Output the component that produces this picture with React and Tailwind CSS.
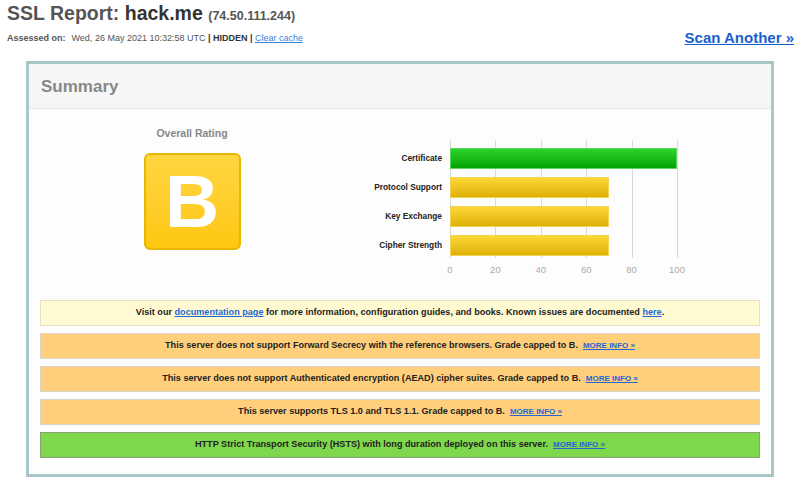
const bars = [
  { label: "Certificate", value: 100, color: "bg-gradient-to-b from-[#2bd42b] to-[#00a300] border-[#5cd65c]" },
  { label: "Protocol Support", value: 70, color: "bg-gradient-to-b from-[#fdd835] to-[#dfb000] border-[#f2d25a]" },
  { label: "Key Exchange", value: 70, color: "bg-gradient-to-b from-[#fdd835] to-[#dfb000] border-[#f2d25a]" },
  { label: "Cipher Strength", value: 70, color: "bg-gradient-to-b from-[#fdd835] to-[#dfb000] border-[#f2d25a]" },
];

const ticks = [0, 20, 40, 60, 80, 100];

const MoreInfo = () => (
  <a href="#" className="ml-[5px] text-[8px] font-bold text-[#2566d6] underline">
    MORE INFO »
  </a>
);

const Notice = ({ tone, children }) => {
  const tones = {
    info: "bg-[#fffad1] border-[#e2e0c4]",
    warn: "bg-[#ffcf7b] border-[#d9d4c8]",
    good: "bg-[#7fd74c] border-[#86a177]",
  };
  return (
    <div
      className={`h-[26px] border flex items-center justify-center text-[9.1px] font-bold text-[#222] ${tones[tone]}`}
    >
      {children}
    </div>
  );
};

const RatingChart = () => (
  <div className="flex">
    <div className="w-[87px] mr-[8px] pt-[8px] flex flex-col gap-[8px]">
      {bars.map((b) => (
        <div key={b.label} className="h-[21px] flex items-center justify-end text-[8.3px] font-bold text-[#222] whitespace-nowrap">
          {b.label}
        </div>
      ))}
    </div>
    <div className="w-[227px]">
      <div className="relative h-[118px] pt-[8px]">
        {/* grid lines */}
        {ticks.map((t) => (
          <div
            key={t}
            className="absolute top-0 bottom-0 w-px bg-[#d9d9d9]"
            style={{ left: `${t}%` }}
          />
        ))}
        <div className="relative flex flex-col gap-[8px]">
          {bars.map((b) => (
            <div
              key={b.label}
              className={`h-[21px] border ${b.color}`}
              style={{ width: `${b.value}%` }}
            />
          ))}
        </div>
      </div>
      <div className="relative h-[12px] mt-[6px] text-[9.5px] leading-[12px] text-[#aaa]">
        {ticks.map((t) => (
          <span
            key={t}
            className="absolute top-0 -translate-x-1/2"
            style={{ left: `${t}%` }}
          >
            {t}
          </span>
        ))}
      </div>
    </div>
  </div>
);

export default function App() {
  return (
    <div className="w-[800px] h-[484px] bg-white font-['Liberation_Sans',Arial,sans-serif] overflow-hidden">
      {/* Report heading */}
      <div className="flex justify-between items-start pl-[7px] pr-[6px] pt-[1px]">
        <div>
          <h1 className="text-[19.5px] leading-[24px] font-bold text-[#555]">
            SSL Report: <span className="text-[#333]">hack.me</span>{" "}
            <span className="text-[12.5px] text-[#555]">(74.50.111.244)</span>
          </h1>
          <div className="mt-[4px] text-[9px] leading-[12px] text-[#555]">
            <span className="font-bold">Assessed on:</span>
            <span className="ml-[6px]">Wed, 26 May 2021 10:32:58 UTC</span>
            <span className="font-bold text-[#333]"> | HIDDEN | </span>
            <a href="#" className="text-[#3b7fd8] underline">Clear cache</a>
          </div>
        </div>
        <a href="#" className="mt-[27.5px] text-[15px] leading-[18px] font-bold text-[#1a5fd0] underline">
          Scan Another »
        </a>
      </div>

      {/* Summary panel */}
      <div className="ml-[26px] mt-[14px] w-[748px] border-[3px] border-[#a9c6c8] bg-[#fdfdfd]">
        <div className="h-[45px] bg-[#f6f6f6] border-b border-[#e0e8e8] flex items-center pl-[12px] pt-[3px]">
          <h2 className="text-[17px] font-bold text-[#888]">Summary</h2>
        </div>

        <div className="pt-[17px] pb-[16px]">
          <div className="flex">
            <div className="w-[326px] flex flex-col items-center">
              <div className="text-[10.5px] leading-[14px] font-bold text-[#888]">Overall Rating</div>
              <div className="mt-[13px] w-[97px] h-[97px] rounded-[6px] border-2 border-[#e8b800] bg-gradient-to-b from-[#ffd63f] to-[#ffc70c] flex items-center justify-center">
                <span className="text-[75px] leading-none font-bold text-white">B</span>
              </div>
            </div>
            <div className="mt-[14px]">
              <RatingChart />
            </div>
          </div>

          <div className="mt-[24px] mx-[11px] flex flex-col gap-[7px]">
            <Notice tone="info">
              <span>
                Visit our{" "}
                <a href="#" className="text-[#2566d6] underline">documentation page</a>{" "}
                for more information, configuration guides, and books. Known issues are documented{" "}
                <a href="#" className="text-[#2566d6] underline">here</a>.
              </span>
            </Notice>
            <Notice tone="warn">
              <span>This server does not support Forward Secrecy with the reference browsers. Grade capped to B.</span>
              <MoreInfo />
            </Notice>
            <Notice tone="warn">
              <span>This server does not support Authenticated encryption (AEAD) cipher suites. Grade capped to B.</span>
              <MoreInfo />
            </Notice>
            <Notice tone="warn">
              <span>This server supports TLS 1.0 and TLS 1.1. Grade capped to B.</span>
              <MoreInfo />
            </Notice>
            <Notice tone="good">
              <span>HTTP Strict Transport Security (HSTS) with long duration deployed on this server.</span>
              <MoreInfo />
            </Notice>
          </div>
        </div>
      </div>
    </div>
  );
}
